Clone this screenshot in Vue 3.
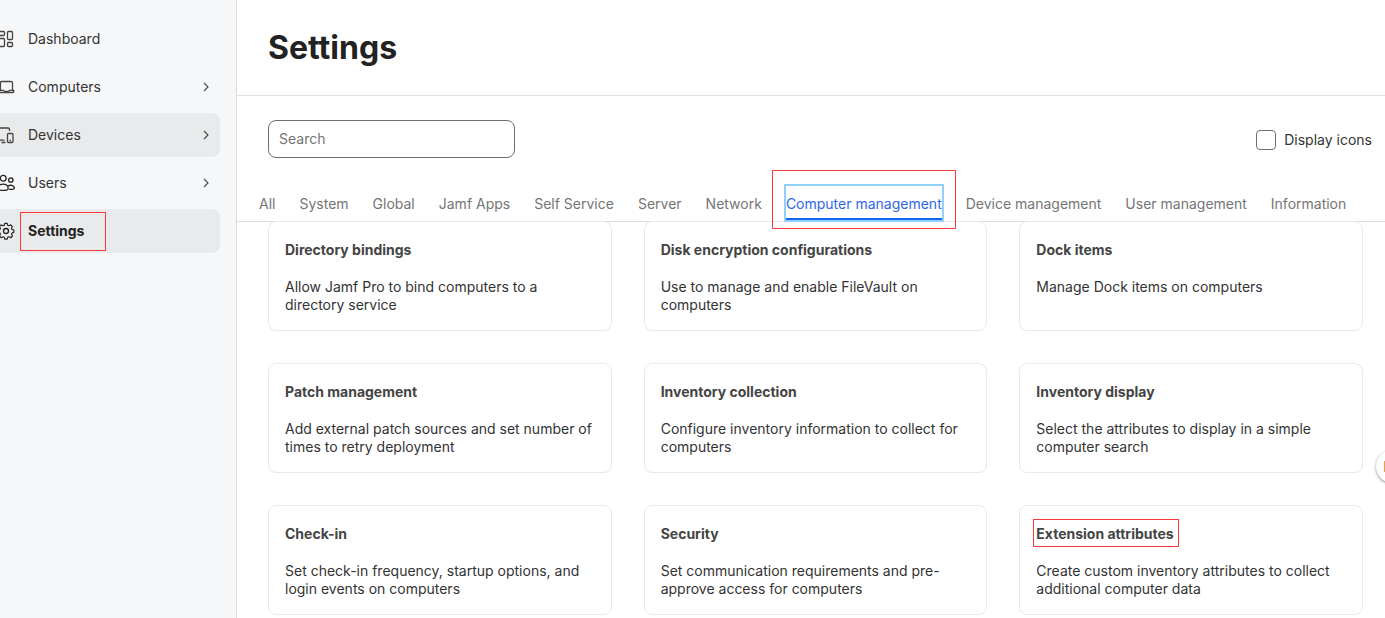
<script setup>
import { ref } from 'vue'

const search = ref('')
const displayIcons = ref(false)
const activeTab = ref('Computer management')

const navItems = [
    { name: 'Dashboard', icon: 'dashboard' },
    { name: 'Computers', icon: 'computers', expandable: true },
    { name: 'Devices', icon: 'devices', expandable: true, hovered: true },
    { name: 'Users', icon: 'users', expandable: true },
    { name: 'Settings', icon: 'settings', current: true, marked: true },
]

const tabs = [
    'All',
    'System',
    'Global',
    'Jamf Apps',
    'Self Service',
    'Server',
    'Network',
    'Computer management',
    'Device management',
    'User management',
    'Information',
]

const cards = [
    { title: 'Directory bindings', text: 'Allow Jamf Pro to bind computers to a directory service' },
    { title: 'Disk encryption configurations', text: 'Use to manage and enable FileVault on computers' },
    { title: 'Dock items', text: 'Manage Dock items on computers' },
    { title: 'Patch management', text: 'Add external patch sources and set number of times to retry deployment' },
    { title: 'Inventory collection', text: 'Configure inventory information to collect for computers' },
    { title: 'Inventory display', text: 'Select the attributes to display in a simple computer search' },
    { title: 'Check-in', text: 'Set check-in frequency, startup options, and login events on computers' },
    { title: 'Security', text: 'Set communication requirements and pre-approve access for computers' },
    { title: 'Extension attributes', text: 'Create custom inventory attributes to collect additional computer data', marked: true },
]
</script>

<template>
    <div class="page">
        <nav class="sidebar" aria-label="Main">
            <a v-for="item in navItems" :key="item.name" href="#" class="nav-item"
                :class="{ hovered: item.hovered, current: item.current }">
                <svg class="nav-icon" viewBox="0 0 18 18" aria-hidden="true">
                    <g v-if="item.icon === 'dashboard'">
                        <rect x="2.500" y="1.500" width="6" height="4" rx="1" />
                        <rect x="2.500" y="8.500" width="6" height="8" rx="1" />
                        <rect x="11.500" y="1.500" width="5" height="8" rx="1" />
                        <rect x="11.500" y="12.500" width="5" height="4" rx="1" />
                    </g>
                    <g v-else-if="item.icon === 'computers'">
                        <path d="M4.400 12.500V5a1.500 1.500 0 0 1 1.500-1.500h9.100a1.500 1.500 0 0 1 1.500 1.500v7.500" />
                        <path d="M1.500 12.500h6l1 .9h4l1-.9h4.300v.7a1.400 1.400 0 0 1-1.400 1.400H2.900a1.400 1.400 0 0 1-1.400-1.400z" />
                    </g>
                    <g v-else-if="item.icon === 'devices'">
                        <path d="M1 14V3.500a1.500 1.500 0 0 1 1.500-1.500h9.500a1.500 1.500 0 0 1 1.500 1.500V5" />
                        <path d="M1 14.200h7.500M5.500 16.500h4" />
                        <rect x="11.500" y="7.500" width="5.500" height="9" rx="1" />
                        <path d="M13.500 14.500h1.500" />
                    </g>
                    <g v-else-if="item.icon === 'users'" class="dark">
                        <circle cx="7.200" cy="4.200" r="2.900" />
                        <circle cx="14.800" cy="6" r="2.200" />
                        <path d="M1.500 14.500c0-2.800 2.300-4.300 5.500-4.300s5.200 1.500 5.200 4.300c0 1.300-1.500 1.900-5.200 1.900s-5.500-.6-5.500-1.900z" />
                        <path d="M12 11.800c3.300-1.200 6.400-.2 6.400 2.200 0 1.200-2 1.600-5.400 1.400" />
                    </g>
                    <g v-else class="dark">
                        <path d="M8.100 1.500h2.800l.5 2.100 1.600.7 1.900-1.100 2 2-1.100 1.900.6 1.500 2.100.6v2.700l-2.100.5-.6 1.600 1.100 1.900-2 2-1.900-1.100-1.600.6-.5 2.100H8.100l-.5-2.100-1.600-.6-1.900 1.100-2-2 1.100-1.900-.6-1.600-2.100-.5V9.200l2.100-.6.6-1.500-1.100-1.900 2-2L6 4.300l1.600-.7z" stroke-linejoin="round" transform="translate(1.600 0) scale(.88)" />
                        <circle cx="10" cy="9" r="2.500" />
                    </g>
                </svg>
                <span class="nav-label">{{ item.name }}</span>
                <svg v-if="item.expandable" class="chevron" viewBox="0 0 8 10" aria-hidden="true">
                    <path d="M2 1l4 4-4 4" />
                </svg>
                <span v-if="item.marked" class="mark nav-mark"></span>
            </a>
        </nav>

        <main class="content">
            <header class="page-header">
                <h1>Settings</h1>
            </header>

            <div class="toolbar">
                <input v-model="search" class="search" type="search" placeholder="Search" aria-label="Search">
                <label class="toggle">
                    <input v-model="displayIcons" type="checkbox">
                    <span>Display icons</span>
                </label>
            </div>

            <div class="tabs" role="tablist">
                <button v-for="tab in tabs" :key="tab" type="button" role="tab" class="tab"
                    :class="{ active: tab === activeTab }" :aria-selected="tab === activeTab"
                    @click="activeTab = tab">
                    {{ tab }}
                    <span v-if="tab === 'Computer management'" class="mark tab-mark"></span>
                </button>
            </div>

            <section class="cards">
                <article v-for="card in cards" :key="card.title" class="card">
                    <h2>{{ card.title }}<span v-if="card.marked" class="mark title-mark"></span></h2>
                    <p>{{ card.text }}</p>
                </article>
            </section>
        </main>

        <button type="button" class="widget" aria-label="Open help"><span class="widget-glyph"></span></button>
    </div>
</template>

<style>
body {
    margin: 0;
    background-color: #fff;
}
</style>

<style scoped>
* {
    box-sizing: border-box;
}
.page {
    position: relative;
    display: flex;
    height: 100vh;
    overflow: hidden;
    font-family: Inter, "Liberation Sans", sans-serif;
    font-size: 14px;
    font-weight: 400;
    color: #333;
}
.sidebar {
    display: flex;
    flex-direction: column;
    gap: 4px;
    flex: 0 0 237px;
    padding: 17px 16px 0 0;
    background-color: #f6f7f9;
    border-right: 1px solid #d9dbde;
}
.nav-item {
    position: relative;
    display: flex;
    align-items: center;
    height: 44px;
    padding-right: 10px;
    border-radius: 0 8px 8px 0;
    color: #333;
    text-decoration: none;
}
.nav-item.hovered, .nav-item.current {
    background-color: #e9eaeb;
}
.nav-item.current {
    font-weight: 700;
    color: #222;
}
.nav-icon {
    flex: none;
    width: 18px;
    height: 18px;
    margin-left: -4px;
    margin-right: 14px;
    overflow: visible;
    fill: none;
    stroke: #444;
    stroke-width: 1.3;
}
.nav-icon .dark {
    stroke: #222;
}
.nav-label {
    flex: 1;
    padding-bottom: 2px;
}
.chevron {
    width: 8px;
    height: 10px;
    fill: none;
    stroke: #444;
    stroke-width: 1.1;
}
/* red call-out frames */
.mark {
    position: absolute;
    z-index: 2;
    border: 1px solid #fb3b3b;
    pointer-events: none;
}
.nav-mark {
    top: 3px;
    left: 20px;
    width: 86px;
    height: 39px;
}
.tab-mark {
    inset: -16px -14px -11px -14px;
}
.title-mark {
    inset: -3px -5px -1px -3px;
}
.content {
    flex: 1;
    min-width: 0;
}
.page-header {
    padding: 28px 31px 27px;
    border-bottom: 1px solid #e0e0e2;
}
h1 {
    margin: 0;
    font-size: 32px;
    line-height: 40px;
    font-weight: 700;
    color: #222;
}
.toolbar {
    display: flex;
    align-items: center;
    justify-content: space-between;
    padding: 24px 13px 26px 31px;
}
.search {
    width: 247px;
    height: 38px;
    padding: 0 10px 2px;
    border: 1px solid #6e6e73;
    border-radius: 8px;
    background-color: #fff;
    font: inherit;
    color: inherit;
    appearance: none;
}
.search::placeholder {
    color: #757575;
    opacity: 1;
}
.toggle {
    display: flex;
    align-items: center;
    gap: 8px;
    padding-top: 2px;
}
.toggle span {
    padding-bottom: 2px;
}
.toggle input {
    width: 20px;
    height: 20px;
    margin: 0;
    border: 1px solid #6e6e73;
    border-radius: 4px;
    appearance: none;
}
.toggle input:checked {
    background-color: #1a6ef0;
}
.tabs {
    display: flex;
    gap: 24px;
    padding: 2px 22px 1px;
    border-bottom: 1px solid #dcdde0;
}
.tab {
    position: relative;
    height: 34px;
    padding: 4px 0 0;
    border: 0;
    border-bottom: 2px solid transparent;
    background: none;
    font: inherit;
    line-height: 28px;
    color: #757575;
    white-space: nowrap;
}
.tab.active {
    border-bottom-color: #1267ec;
    outline: 2px solid #90d0fb;
    color: #2f66e8;
}
.cards {
    display: grid;
    grid-template-columns: repeat(3, 1fr);
    gap: 32px;
    margin-top: -1px;
    padding: 0 22px 32px 31px;
}
.card {
    min-height: 110px;
    padding: 16px;
    border: 1px solid #e9e9eb;
    border-radius: 8px;
}
h2 {
    position: relative;
    width: fit-content;
    margin: 0 0 16px;
    font-size: 14px;
    line-height: 24px;
    font-weight: 700;
    color: #444;
}
p {
    margin: 0;
    line-height: 18px;
}
/* floating widget that peeks in from the right edge */
.widget {
    position: absolute;
    top: 450px;
    right: -24px;
    width: 33px;
    height: 33px;
    padding: 0 0 0 8px;
    border: 0;
    border-radius: 50%;
    background-color: #fff;
    box-shadow: 0 1px 3px rgba(0, 0, 0, .45);
}
.widget-glyph {
    display: block;
    width: 14px;
    height: 11px;
    background-color: #e8a04c;
}
</style>
